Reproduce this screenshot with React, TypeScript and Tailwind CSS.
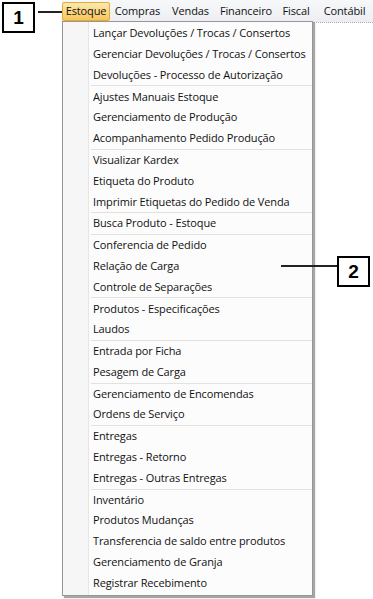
import React from 'react'

const MENU_BAR = [
  { label: 'Estoque', w: 'w-[48px]', active: true },
  { label: 'Compras', w: 'w-[55px]' },
  { label: 'Vendas', w: 'w-[51px]' },
  { label: 'Financeiro', w: 'w-[60px]' },
  { label: 'Fiscal', w: 'w-[40px]' },
  { label: 'Contábil', w: 'w-[57px]' }
]

// grupos separados por linha
const GROUPS: string[][] = [
  [
    'Lançar Devoluções / Trocas / Consertos',
    'Gerenciar Devoluções / Trocas / Consertos',
    'Devoluções - Processo de Autorização'
  ],
  ['Ajustes Manuais Estoque', 'Gerenciamento de Produção', 'Acompanhamento Pedido Produção'],
  ['Visualizar Kardex', 'Etiqueta do Produto', 'Imprimir Etiquetas do Pedido de Venda'],
  ['Busca Produto - Estoque'],
  ['Conferencia de Pedido', 'Relação de Carga', 'Controle de Separações'],
  ['Produtos - Especificações', 'Laudos'],
  ['Entrada por Ficha', 'Pesagem de Carga'],
  ['Gerenciamento de Encomendas', 'Ordens de Serviço'],
  ['Entregas', 'Entregas - Retorno', 'Entregas - Outras Entregas'],
  [
    'Inventário',
    'Produtos Mudanças',
    'Transferencia de saldo entre produtos',
    'Gerenciamento de Granja',
    'Registrar Recebimento'
  ]
]

const uiFont = { fontFamily: '"Open Sans", "Noto Sans", sans-serif' }

function Callout({ n }: { n: string }) {
  return (
    <div
      className="flex h-[31px] w-[33px] items-center justify-center border-2 border-black bg-white text-[19px] font-bold leading-none text-black"
      style={{ fontFamily: '"Liberation Sans", Arial, sans-serif' }}
    >
      {n}
    </div>
  )
}

export default function App() {
  return (
    <div
      className="relative h-[599px] w-[373px] overflow-hidden bg-white text-[11px] tracking-[-0.12px] text-[#111]"
      style={uiFont}
    >
      {/* menu bar */}
      <div className="ml-[62px] flex h-[22px] items-center bg-gradient-to-b from-[#f7f8fa] to-[#eceef2]">
        {MENU_BAR.map((m) => (
          <div
            key={m.label}
            className={
              m.active
                ? `${m.w} flex h-[19px] items-center justify-center rounded-[2px] border border-[#e4a93c] bg-gradient-to-b from-[#fde9ac] to-[#f8c455]`
                : `${m.w} flex h-[19px] items-center justify-center`
            }
          >
            {m.label}
          </div>
        ))}
      </div>
      <div className="ml-[313px] border-t border-dotted border-[#a8a8a8]" />

      {/* dropdown */}
      <div className="absolute left-[62px] top-[21px] w-[251px] border border-[#979797] bg-[#fcfcfc] py-px shadow-[2px_2px_1px_rgba(0,0,0,0.35)]">
        <div className="absolute bottom-0 left-0 top-0 w-[26px] border-r border-[#e6e6e6] bg-[#f6f6f6]" />
        <div className="relative flex flex-col">
          {GROUPS.map((group, gi) => (
            <div key={gi} className="flex flex-col">
              {gi > 0 && <div className="ml-[28px] h-px bg-[#e4e1dc]" />}
              {group.map((item) => (
                <div key={item} className="flex h-[20.8px] items-center pl-[30px] whitespace-nowrap">
                  {item}
                </div>
              ))}
            </div>
          ))}
        </div>
      </div>

      {/* callout 1 */}
      <div className="absolute left-[2px] top-[2px] flex items-start">
        <Callout n="1" />
        <div className="ml-[3px] mt-[9px] h-[2px] w-[24px] bg-[#222]" />
      </div>

      {/* callout 2 */}
      <div className="absolute left-[281px] top-[256px] flex items-center">
        <div className="mt-[-11px] h-[2px] w-[56px] bg-[#222]" />
        <Callout n="2" />
      </div>
    </div>
  )
}
